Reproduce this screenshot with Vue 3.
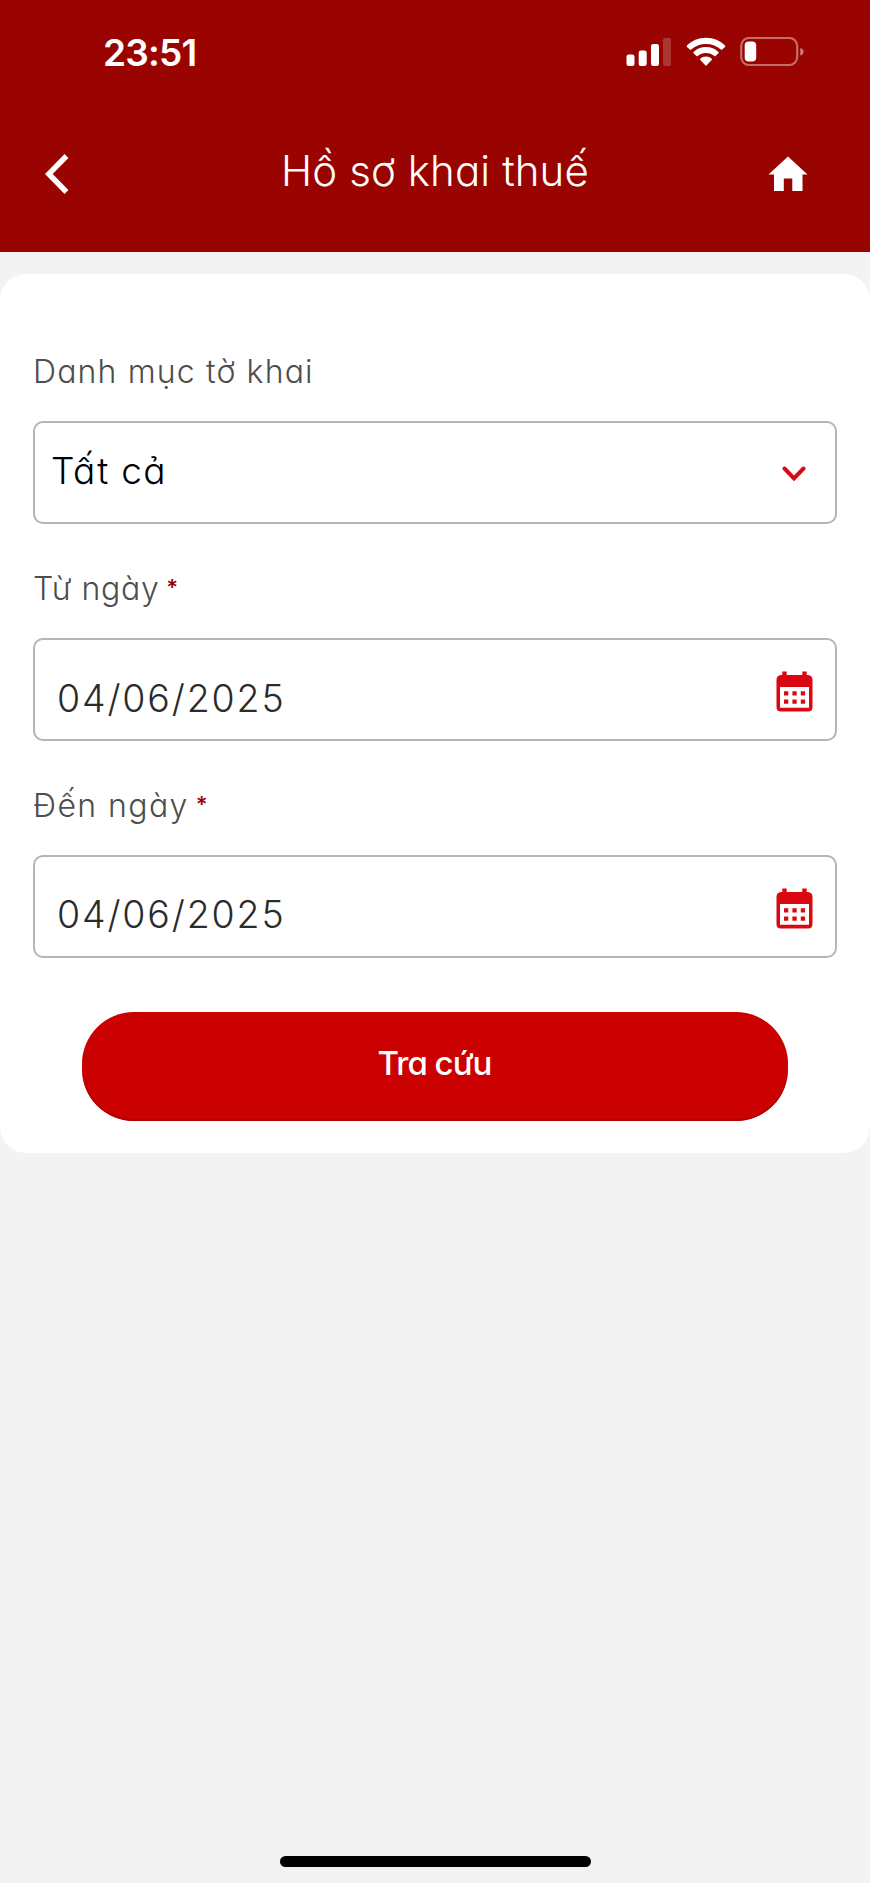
<script setup>
import { ref } from 'vue'

const category = ref('Tất cả')
const dates = ref([
  { id: 'from', label: 'Từ ngày', value: '04/06/2025' },
  { id: 'to', label: 'Đến ngày', value: '04/06/2025' },
])
</script>

<template>
  <div class="screen">
    <header class="header">
      <div class="status">
        <span class="clock">23:51</span>
        <div class="indicators">
          <svg class="signal" width="46" height="30" viewBox="0 0 46 30" fill="#fff">
            <rect x="0.5" y="17.500" width="8" height="11.500" rx="2.200" />
            <rect x="12.700" y="13.500" width="8" height="15.500" rx="2.200" />
            <rect x="25" y="7" width="8" height="22" rx="2.200" />
            <rect x="37" y="1" width="8" height="28" rx="2.200" opacity="0.2" />
          </svg>
          <svg class="wifi" width="40" height="30" viewBox="0 0 40 30" fill="#fff">
            <path d="M20 0.800C27.600 0.800 34.200 3.800 39 8.500Q39.700 9.200 39 9.900L36.200 12.600Q35.600 13.200 34.900 12.600C30.800 8.900 26 6.900 20 6.900S9.200 8.900 5.100 12.600Q4.400 13.200 3.800 12.600L1 9.900Q0.300 9.200 1 8.500C5.800 3.800 12.400 0.800 20 0.800Z" />
            <path d="M20 10.100C24.900 10.100 29.200 11.900 32.400 14.900Q33.100 15.600 32.400 16.300L29.600 19Q29 19.600 28.300 19C26 17 23.300 16 20 16S14 17 11.700 19Q11 19.600 10.400 19L7.600 16.300Q6.900 15.600 7.600 14.900C10.800 11.900 15.100 10.100 20 10.100Z" />
            <path d="M20 19.600C22.200 19.600 24.200 20.400 25.700 21.700Q26.400 22.400 25.700 23.100L20.700 28.300Q20 29 19.300 28.300L14.300 23.100Q13.600 22.400 14.300 21.700C15.800 20.400 17.800 19.600 20 19.600Z" />
          </svg>
          <svg class="battery" width="64" height="30" viewBox="0 0 64 30">
            <rect x="1.200" y="1" width="56" height="27" rx="8" fill="none" stroke="#fff" stroke-opacity="0.42" stroke-width="2.200" />
            <path d="M60.300 11C64.600 11.900 64.600 17.500 60.300 18.400Z" fill="#fff" fill-opacity="0.5" />
            <rect x="4.700" y="4.500" width="11.500" height="20" rx="4" fill="#fff" />
          </svg>
        </div>
      </div>
      <nav class="nav">
        <svg class="back" width="24" height="40" viewBox="0 0 24 40" fill="none" stroke="#fff" stroke-width="5.400">
          <path d="M21.500 2L3.800 20L21.500 38" />
        </svg>
        <h1 class="title">Hồ sơ khai thuế</h1>
        <svg class="home" width="40" height="36" viewBox="0 0 40 36" fill="#fff">
          <path d="M20 0.500L39.500 18.500H34.500V35H24.300V22.500H15.800V35H6V18.500H0.500Z" />
        </svg>
      </nav>
    </header>

    <main class="card">
      <div class="field">
        <div class="label label-category">Danh mục tờ khai</div>
        <div class="box select">
          <span class="choice">{{ category }}</span>
          <svg class="chevron" width="24" height="16" viewBox="0 0 24 16" fill="none" stroke="#da0810" stroke-width="4" stroke-linecap="round">
            <path d="M2.500 2.500L12 12.300L21.500 2.500" />
          </svg>
        </div>
      </div>
      <div v-for="d in dates" :key="d.id" class="field">
        <div class="label" :class="'label-' + d.id">
          <span>{{ d.label }}</span>
          <span class="required">*</span>
        </div>
        <div class="box date">
          <span class="value">{{ d.value }}</span>
          <svg class="calendar" width="37" height="41" viewBox="0 0 37 41">
            <path fill="#da0810" fill-rule="evenodd" d="M6.300 0.500H10.700V4H26.300V0.500H30.700V4H32Q36.500 4.500 36.500 9V36Q36.500 40.500 32 40.500H5Q0.500 40.500 0.500 36V9Q0.500 4.500 5 4H6.300ZM4 16V36.700H33V16Z" />
            <path fill="#da0810" d="M8 20.300h4.300v4.300H8zM16.400 20.300h4.300v4.300h-4.300zM24.800 20.300h4.300v4.300h-4.300zM8 28.400h4.300v4.300H8zM16.400 28.400h4.300v4.300h-4.300zM24.800 28.400h4.300v4.300h-4.300z" />
          </svg>
        </div>
      </div>
      <button class="submit" type="button"><span>Tra cứu</span></button>
    </main>

    <div class="home-indicator"></div>
  </div>
</template>

<style>
body {
  background: #f3f3f3;
}
</style>

<style scoped>
.screen {
  box-sizing: border-box;
  width: 870px;
  height: 1883px;
  display: flex;
  flex-direction: column;
  background: #f3f3f3;
  font-family: Inter, "Open Sans", sans-serif;
  font-weight: 300;
  font-feature-settings: "cv11";
  overflow: hidden;
}
.header {
  box-sizing: border-box;
  height: 252.400px;
  flex: none;
  background: #990400;
  color: #fff;
}
.status {
  box-sizing: border-box;
  height: 104px;
  padding: 0 66px 0 103px;
  display: flex;
  align-items: center;
  justify-content: space-between;
}
.clock {
  margin-top: 1px;
  font-size: 37px;
  font-weight: 600;
  line-height: 44px;
  letter-spacing: -0.8px;
}
.indicators {
  display: flex;
  align-items: center;
}
.wifi {
  margin-left: 14px;
}
.battery {
  margin-left: 14px;
}
.nav {
  display: flex;
  justify-content: space-between;
  align-items: center;
  height: 132px;
  padding: 0 62px 0 45px;
  box-sizing: border-box;
}
.back {
  margin-top: 8px;
}
.home {
  margin-top: 8px;
}
.title {
  margin: 2px 0 0 33px;
  font-size: 42px;
  line-height: 50px;
  font-weight: 300;
  letter-spacing: 0.1px;
  white-space: nowrap;
}
.card {
  box-sizing: border-box;
  height: 879px;
  flex: none;
  margin-top: 22px;
  padding: 77px 33px 0;
  background: #fff;
  border-radius: 26px;
}
.field {
  height: 216.800px;
}
.label {
  display: flex;
  height: 40px;
  padding-top: 1px;
  box-sizing: border-box;
  font-size: 32px;
  line-height: 40px;
  color: #4d4d4d;
  white-space: nowrap;
}
.label-category {
  letter-spacing: 1.150px;
}
.label-from {
  letter-spacing: 0.650px;
}
.label-to {
  letter-spacing: 1.400px;
}
.required {
  margin: -2px 0 0 7px;
  color: #990010;
  font-size: 22px;
  font-weight: 600;
}
.box {
  box-sizing: border-box;
  height: 103px;
  margin-top: 30px;
  border: 2px solid #b5b5b5;
  border-radius: 10px;
  display: flex;
  align-items: center;
  justify-content: space-between;
  font-size: 37px;
  line-height: 44px;
}
.select {
  padding: 0 29px 0 16px;
  color: #000;
}
.choice {
  margin-bottom: 3px;
  letter-spacing: 1.300px;
}
.chevron {
  margin-top: 3px;
}
.date {
  padding: 0 22px 0 22px;
  color: #2b2b2b;
}
.value {
  margin-top: 18px;
  font-size: 37.500px;
  letter-spacing: 1.850px;
}
.calendar {
  margin-top: 4px;
}
.submit {
  display: flex;
  align-items: center;
  justify-content: center;
  box-sizing: border-box;
  width: 706px;
  height: 109.500px;
  margin: 10px auto 0;
  padding: 0 1px 7px 0;
  border: 0;
  border-radius: 52px;
  background: #cb0000;
  box-shadow: inset 0 -2px 1px #b00006;
  color: #fff;
  font-family: inherit;
  font-feature-settings: inherit;
  font-size: 33px;
  font-weight: 500;
  letter-spacing: -1px;
}
.home-indicator {
  width: 311px;
  height: 11px;
  margin: auto auto 16px;
  border-radius: 6px;
  background: #000;
}
</style>
